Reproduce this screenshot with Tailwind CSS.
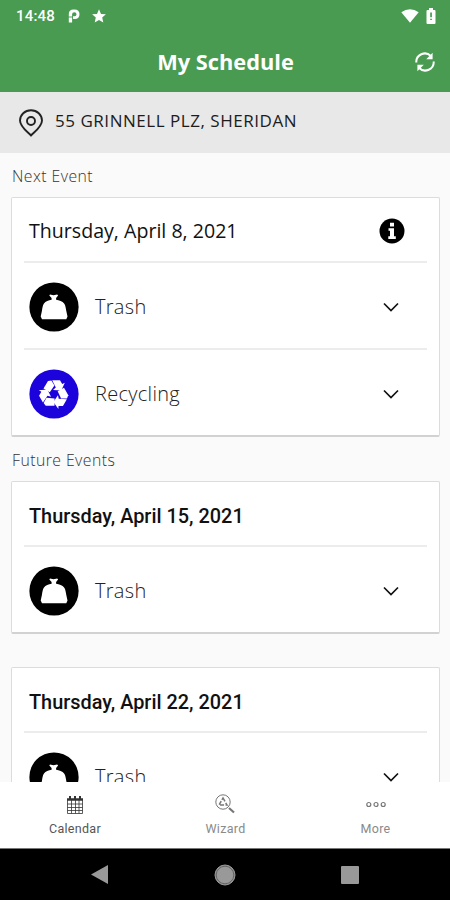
<!DOCTYPE html>
<html lang="en">
<head>
    <meta charset="UTF-8">
    <meta name="viewport" content="width=device-width, initial-scale=1.0">
    <title>My Schedule</title>
    <script src="https://cdn.jsdelivr.net/npm/@tailwindcss/browser@4"></script>
</head>
<body class="bg-[#fafafa] font-['Open_Sans',sans-serif]">
    <!-- Shared icons -->
    <svg class="hidden">
        <symbol id="trash" viewBox="0 0 50 50">
            <circle cx="25" cy="25" r="24.6" fill="#000"/>
            <path fill="#fff" d="M21 12.500l3.500.8 3.700-.8.9 1-2 2.500v1.800c3 .3 6.500 1.700 8 3.700 1.500 2 1.600 4.500 2.200 7.500l1.200 5.500-1.200 2.700H13l-1.300-2.700 1.200-5.500c.5-3 .7-5.500 2.100-7.500 1.500-2 4.600-3.400 7.600-3.700v-1.800l-2.300-2.500z"/>
        </symbol>
        <symbol id="recycle" viewBox="0 0 50 50">
            <circle cx="25" cy="25" r="24.6" fill="#1c03dc"/>
            <g fill="#fff" transform="translate(25 25)">
                <g id="arm">
                    <path d="M-6-13L-10.500-5.500-4.200-1.800.4-8.400-2.600-13.500z"/>
                    <path d="M-1.800-13.800H6L8.200-9.900 10.800-11.300 7.300-3.500-1-4 1.800-6.500z"/>
                </g>
                <use href="#arm" transform="rotate(120)"/>
                <use href="#arm" transform="rotate(240)"/>
            </g>
        </symbol>
        <symbol id="chevron" viewBox="0 0 18 12">
            <path d="M2 2.500l7 7 7-7" fill="none" stroke="#111" stroke-width="1.700"/>
        </symbol>
    </svg>

    <div class="w-[450px] h-[900px] flex flex-col overflow-hidden">
        <header class="h-[92px] shrink-0 bg-[#489b50] text-white">
            <div class="h-8 flex items-center justify-between pl-4 pr-[14px]">
                <div class="flex items-center">
                    <span class="w-[39px] whitespace-nowrap font-['Roboto',sans-serif] font-medium text-[15px] leading-8 tracking-[0.2px]">14:48</span>
                    <svg class="ml-[13px] w-3 h-[14px]" viewBox="0 0 12 14"><path fill="#fff" fill-rule="evenodd" d="M.8 7.500V5Q.8.500 5.600.500H6.500Q11.500.500 11.500 5.200T6.800 10H5V7.300H6.500Q8.500 7.200 8.500 5.200T6.300 3.200Q4.100 3.200 4.100 5.200V7.500zM.8 8.500H4.100V13.500H.8z"/></svg>
                    <svg class="ml-3 w-[14px] h-[14px]" viewBox="0 0 14 14" fill="#fff"><path d="M7 .3l2 4.600 4.900.4-3.700 3.300 1.100 4.900L7 10.900l-4.300 2.600 1.100-4.900L.1 5.300 5 4.900z"/></svg>
                </div>
                <div class="flex items-center gap-[7px]">
                    <svg class="w-[18px] h-[14px]" viewBox="0 0 18 14" fill="#fff"><path d="M.3 3.300Q9-2.800 17.700 3.300L9 13.700z"/></svg>
                    <svg class="w-[10px] h-4" viewBox="0 0 10 16"><path fill="#fff" d="M3 0h4v2h1.500q1 0 1 1v12q0 1-1 1h-7q-1 0-1-1V3q0-1 1-1H3z"/><path fill="#489b50" d="M4.200 4.500h1.700v4.700H4.200zM4.200 10.700h1.700v1.200H4.200z"/></svg>
                </div>
            </div>
            <div class="h-[60px] grid grid-cols-[1fr_auto_1fr] items-center pr-[15px]">
                <h1 class="col-start-2 pl-4 text-[21.800px] leading-[60px] font-bold">My Schedule</h1>
                <svg class="justify-self-end w-5 h-5" viewBox="0 0 20 20" fill="none" stroke="#fff" stroke-width="2"><path d="M1.300 10.500A8.500 8.500 0 0 1 15.800 4M18.700 9.500A8.500 8.500 0 0 1 4.200 16"/><path fill="#fff" stroke="none" d="M17.600.8v6.400h-6.400zM2.400 19.200v-6.400h6.400z"/></svg>
            </div>
        </header>

        <div class="h-[61px] shrink-0 bg-[#e8e8e8] flex items-center pl-[19px]">
            <svg class="w-6 h-7" viewBox="0 0 24 28" fill="none" stroke="#222" stroke-width="1.900"><path d="M12 26.500C7.500 22 1 17.500 1 11.500a11 10.300 0 0 1 22 0C23 17.500 16.500 22 12 26.500z"/><circle cx="12" cy="12" r="4"/></svg>
            <span class="ml-3 pb-1 text-[17px] tracking-[0.530px] text-[#1c1c1c] whitespace-nowrap">55 GRINNELL PLZ, SHERIDAN</span>
        </div>

        <main class="flex-1 min-h-0 overflow-hidden px-[11px]">
            <h2 class="h-11 pl-px leading-[46px] text-[15.800px] tracking-[0.450px] font-light text-[#333]">Next Event</h2>
            <section class="h-[240px] w-[429px] bg-white border border-[#dcdcdc] border-b-2 border-b-[#d2d2d2] rounded-[2px] px-3">
                <div class="h-[65px] flex items-center justify-between pl-[5px] pr-[22px] pt-[3px] border-b-2 border-[#ececec]">
                    <span class="text-[19.600px] text-[#111]">Thursday, April 8, 2021</span>
                    <svg class="w-[26px] h-[26px]" viewBox="0 0 26 26"><circle cx="13" cy="13" r="12.500" fill="#000"/><path fill="#fff" d="M11 4.800h4v3.800h-4zM9.500 10.300H15v8h1.800V21H9.300v-2.700H11v-5.500H9.500z"/></svg>
                </div>
                <div class="h-[87px] flex items-center pt-[2px] pl-[5px] pr-[27px] border-b-2 border-[#ececec]">
                    <svg class="w-[50px] h-[50px]"><use href="#trash"/></svg>
                    <span class="ml-4 flex-1 text-[20px] tracking-[0.300px] font-light text-[#222]">Trash</span>
                    <svg class="w-[18px] h-3"><use href="#chevron"/></svg>
                </div>
                <div class="h-[84px] flex items-center pt-[3px] pl-[5px] pr-[27px]">
                    <svg class="w-[50px] h-[50px]"><use href="#recycle"/></svg>
                    <span class="ml-4 flex-1 text-[20px] tracking-[0.300px] font-light text-[#222]">Recycling</span>
                    <svg class="w-[18px] h-3"><use href="#chevron"/></svg>
                </div>
            </section>

            <h2 class="h-11 pl-px leading-[46px] text-[15.800px] tracking-[0.450px] font-light text-[#333]">Future Events</h2>
            <section class="h-[153px] w-[429px] bg-white border border-[#dcdcdc] border-b-2 border-b-[#d2d2d2] rounded-[2px] px-3">
                <div class="h-[65px] flex items-center pl-[5px] pt-[7px] border-b-2 border-[#ececec]">
                    <span class="font-['Roboto',sans-serif] font-medium text-[19.900px] text-[#111]">Thursday, April 15, 2021</span>
                </div>
                <div class="h-[87px] flex items-center pl-[5px] pr-[27px]">
                    <svg class="w-[50px] h-[50px]"><use href="#trash"/></svg>
                    <span class="ml-4 flex-1 text-[20px] tracking-[0.300px] font-light text-[#222]">Trash</span>
                    <svg class="w-[18px] h-3"><use href="#chevron"/></svg>
                </div>
            </section>

            <section class="mt-[33px] h-[153px] w-[429px] bg-white border border-[#dcdcdc] border-b-2 border-b-[#d2d2d2] rounded-[2px] px-3">
                <div class="h-[65px] flex items-center pl-[5px] pt-[7px] border-b-2 border-[#ececec]">
                    <span class="font-['Roboto',sans-serif] font-medium text-[19.900px] text-[#111]">Thursday, April 22, 2021</span>
                </div>
                <div class="h-[87px] flex items-center pl-[5px] pr-[27px]">
                    <svg class="w-[50px] h-[50px]"><use href="#trash"/></svg>
                    <span class="ml-4 flex-1 text-[20px] tracking-[0.300px] font-light text-[#222]">Trash</span>
                    <svg class="w-[18px] h-3"><use href="#chevron"/></svg>
                </div>
            </section>
        </main>

        <nav class="h-[66px] shrink-0 bg-white grid grid-cols-3 justify-items-center font-['Roboto',sans-serif] text-[12.500px] tracking-[0.300px]">
            <a class="flex flex-col items-center pt-[13px] text-[#555]">
                <svg class="w-[18px] h-5" viewBox="0 0 18 20" fill="none" stroke="#333"><path stroke-width="2.500" d="M1 4.500h16"/><path stroke-width="2" d="M4 1v4M9 1v4M14 1v4"/><path stroke-width=".8" d="M1.500 5v13.500h15V5M5.500 5v13.500M9.500 5v13.500M13 5v13.500M1.500 9h15M1.500 12.500h15M1.500 15.500h15"/></svg>
                <span class="mt-[5px] leading-[18px]">Calendar</span>
            </a>
            <a class="flex flex-col items-center pt-3 pl-px text-[#8a8a8a]">
                <svg class="w-5 h-5" viewBox="0 0 20 20" fill="none" stroke="#777"><circle cx="8" cy="8" r="7.200"/><path stroke-width="1.500" stroke-dasharray="4 1.500" d="M8 4l4 7H4z"/><path stroke-width="2.200" d="M14 14l5 4.500"/></svg>
                <span class="mt-[6px] leading-[18px]">Wizard</span>
            </a>
            <a class="flex flex-col items-center pt-3 pl-px text-[#8a8a8a]">
                <svg class="w-5 h-5" viewBox="0 0 20 20" fill="none" stroke="#777" stroke-width="1.200"><circle cx="2.800" cy="10.500" r="2"/><circle cx="10" cy="10.500" r="2"/><circle cx="17.200" cy="10.500" r="2"/></svg>
                <span class="mt-[6px] leading-[18px]">More</span>
            </a>
        </nav>

        <footer class="h-[52px] shrink-0 bg-black border-t border-[#777] flex items-center justify-between pl-[91px] pr-[91px]">
            <svg class="w-[17px] h-[19px]" viewBox="0 0 17 19"><path fill="#999" d="M17 0v19L0 9.500z"/></svg>
            <svg class="w-[22px] h-[22px]" viewBox="0 0 22 22"><circle cx="11" cy="11" r="10" fill="#999" stroke="#999"/><circle cx="11" cy="11" r="8.800" fill="none" stroke="#555" stroke-width=".8"/></svg>
            <svg class="w-[18px] h-[18px]" viewBox="0 0 18 18"><rect width="18" height="18" rx="1" fill="#999"/></svg>
        </footer>
    </div>
</body>
</html>
